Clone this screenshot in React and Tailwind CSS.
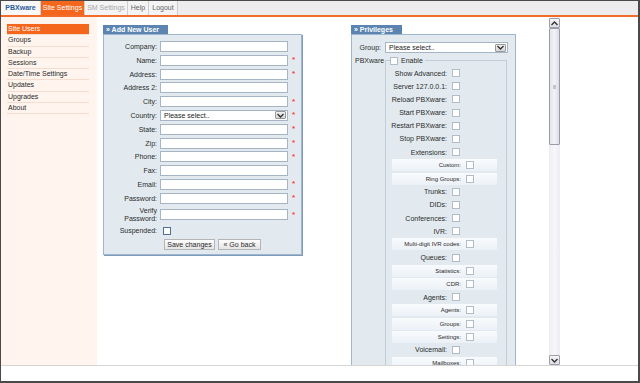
import React from "react";

const Check = ({ dark }) => (
  <span
    className={
      "inline-block w-[8px] h-[8px] bg-white border shrink-0 " +
      (dark ? "border-[#4f6f98]" : "border-[#b3bdc8]")
    }
  />
);

const Arrow = ({ up }) => (
  <svg width="7" height="5" viewBox="0 0 7 5" className="block">
    {up ? (
      <path d="M0.5 4 L3.5 1 L6.5 4" fill="none" stroke="#333" strokeWidth="1.4" />
    ) : (
      <path d="M0.5 1 L3.5 4 L6.5 1" fill="none" stroke="#333" strokeWidth="1.4" />
    )}
  </svg>
);

const Select = ({ w }) => (
  <div className={"h-[11px] bg-white border border-[#a5b5c5] flex items-center justify-between pl-[3px] pr-[1px] " + w}>
    <span className="text-[7px] leading-[9px] text-[#222]">Please select..</span>
    <span className="w-[11px] h-[8px] bg-[linear-gradient(#f2f2f2,#d6d6d6)] border border-[#9a9a9a] rounded-[1px] flex items-center justify-center">
      <Arrow />
    </span>
  </div>
);

const Req = () => <span className="ml-[4px] text-[8px] leading-[8px] text-[#ff3b3b] font-bold">*</span>;

const FormRow = ({ label, req, select }) => (
  <div className="flex items-center h-[11px]">
    <div className="w-[53px] text-right text-[7px] leading-[9px] text-[#2a2a2a] shrink-0">{label}</div>
    <div className="w-[3px]" />
    {select ? <Select w="w-[128px]" /> : <div className="w-[128px] h-[11px] bg-white border border-[#a5b5c5]" />}
    {req && <Req />}
  </div>
);

const PrivRow = ({ label, sub }) =>
  sub ? (
    <div className="flex items-center h-[12px] ml-[6px] w-[105px] bg-[linear-gradient(#f9fbfd,#ebf1f7)]">
      <div className="w-[69px] text-right text-[6px] leading-[8px] text-[#2a2a2a] shrink-0">{label}</div>
      <div className="w-[5px]" />
      <Check />
    </div>
  ) : (
    <div className="flex items-center h-[12px]">
      <div className="w-[61px] text-right text-[7px] leading-[9px] text-[#2a2a2a] shrink-0 whitespace-nowrap">{label}</div>
      <div className="w-[5px]" />
      <Check />
    </div>
  );

const privRows = [
  ["Show Advanced:"],
  ["Server 127.0.0.1:"],
  ["Reload PBXware:"],
  ["Start PBXware:"],
  ["Restart PBXware:"],
  ["Stop PBXware:"],
  ["Extensions:"],
  ["Custom:", 1],
  ["Ring Groups:", 1],
  ["Trunks:"],
  ["DIDs:"],
  ["Conferences:"],
  ["IVR:"],
  ["Multi-digit IVR codes:", 1],
  ["Queues:"],
  ["Statistics:", 1],
  ["CDR:", 1],
  ["Agents:"],
  ["Agents:", 1],
  ["Groups:", 1],
  ["Settings:", 1],
  ["Voicemail:"],
  ["Mailboxes:", 1],
];

const menu = ["Site Users", "Groups", "Backup", "Sessions", "Date/Time Settings", "Updates", "Upgrades", "About"];

export default function App() {
  return (
    <div className="w-[640px] h-[383px] bg-white border-t border-l border-r-2 border-b-2 border-[#4a4a4a] flex flex-col overflow-hidden font-['Liberation_Sans',Arial,sans-serif] text-[#2a2a2a]">
      {/* top bar */}
      <div className="h-[16px] shrink-0 bg-[#ededed] border-b-2 border-[#f26c2a] flex items-stretch">
        <div className="w-[40px] bg-[#f8f8f8] border-r border-[#cfcfcf] flex items-center justify-center text-[7px] font-bold text-[#2c5d9c]">PBXware</div>
        <div className="w-[44px] bg-[#f4661c] border-r border-[#cfcfcf] flex items-center justify-center text-[7px] text-white">Site Settings</div>
        <div className="w-[43px] bg-[#f4f4f4] border-r border-[#cfcfcf] flex items-center justify-center text-[7px] text-[#a8a8a8]">SM Settings</div>
        <div className="w-[21px] bg-[#f4f4f4] border-r border-[#cfcfcf] flex items-center justify-center text-[7px] text-[#666]">Help</div>
        <div className="w-[29px] bg-[#f4f4f4] border-r border-[#cfcfcf] flex items-center justify-center text-[7px] text-[#666]">Logout</div>
      </div>

      {/* body */}
      <div className="h-[348px] shrink-0 flex">
        <div className="w-[559px] flex overflow-hidden">
          {/* sidebar */}
          <div className="w-[96px] shrink-0 bg-[#fff4ee] pt-[7px] pl-[6px]">
            {menu.map((m, i) => (
              <div
                key={m}
                className={
                  "w-[82px] h-[11.3px] flex items-center pl-[1px] text-[7px] border-b border-[#f6dccd] " +
                  (i === 0 ? "bg-[#f4661c] text-white" : "text-[#2a2a2a]")
                }
              >
                {m}
              </div>
            ))}
          </div>

          {/* main */}
          <div className="w-[452px] shrink-0 flex items-start pt-[8px] pl-[6px]">
            {/* Add new user */}
            <div className="w-[199px] shrink-0">
              <div className="w-[65px] h-[9px] bg-[#5b84b1] text-white font-bold text-[7px] leading-[9px] pl-[3px]">» Add New User</div>
              <div className="bg-[#e2eaf0] border border-[#9fb6cf] shadow-[1px_1px_0_#7f9aba] pt-[6px] pb-[4px] flex flex-col gap-[2.8px]">
                <FormRow label="Company:" />
                <FormRow label="Name:" req />
                <FormRow label="Address:" req />
                <FormRow label="Address 2:" />
                <FormRow label="City:" req />
                <FormRow label="Country:" req select />
                <FormRow label="State:" req />
                <FormRow label="Zip:" req />
                <FormRow label="Phone:" req />
                <FormRow label="Fax:" />
                <FormRow label="Email:" req />
                <FormRow label="Password:" req />
                <div className="flex items-center h-[16px]">
                  <div className="w-[53px] text-right text-[7px] leading-[7.5px] text-[#2a2a2a] shrink-0">
                    Verify
                    <br />
                    Password:
                  </div>
                  <div className="w-[3px]" />
                  <div className="w-[128px] h-[11px] bg-white border border-[#a5b5c5]" />
                  <Req />
                </div>
                <div className="flex items-center h-[11px]">
                  <div className="w-[53px] text-right text-[7px] leading-[9px] text-[#2a2a2a] shrink-0">Suspended:</div>
                  <div className="w-[6px]" />
                  <Check dark />
                </div>
                <div className="flex items-center h-[11px] pl-[60px] gap-[3px]">
                  <button className="w-[51px] h-[11px] bg-[linear-gradient(#fdfdfd,#e4e4e4)] border border-[#b5b5b5] text-[7px] leading-[9px] text-[#2a2a2a]">Save changes</button>
                  <button className="w-[43px] h-[11px] bg-[linear-gradient(#fdfdfd,#e4e4e4)] border border-[#b5b5b5] text-[7px] leading-[9px] text-[#2a2a2a]">« Go back</button>
                </div>
              </div>
            </div>

            {/* Privileges */}
            <div className="w-[165px] shrink-0 ml-[49px]">
              <div className="w-[51px] h-[9px] bg-[#5b84b1] text-white font-bold text-[7px] leading-[9px] pl-[3px]">» Privileges</div>
              <div className="bg-[#e2eaf0] border border-[#9fb6cf] pt-[7px] h-[400px]">
                <div className="flex items-center h-[11px]">
                  <div className="w-[29px] text-right text-[7px] leading-[9px] shrink-0">Group:</div>
                  <div className="w-[4px]" />
                  <Select w="w-[123px]" />
                </div>
                <div className="flex mt-[3px]">
                  <div className="w-[33px] shrink-0 pl-[3px] text-[7px] leading-[9px]">PBXware</div>
                  <fieldset className="w-[122px] h-[360px] border border-[#c3ccd5]">
                    <legend className="ml-[4px] flex items-center h-[9px] px-[0px]">
                      <Check />
                      <span className="ml-[3px] text-[7px] leading-[9px] pr-[2px]">Enable</span>
                    </legend>
                    <div className="flex flex-col gap-[1.2px] pt-[2px]">
                      {privRows.map(([l, s], i) => (
                        <PrivRow key={i} label={l} sub={!!s} />
                      ))}
                    </div>
                  </fieldset>
                </div>
              </div>
            </div>
          </div>

          {/* scrollbar */}
          <div className="w-[11px] shrink-0 flex flex-col pt-[1px] bg-[#f3f3f8]">
            <div className="h-[10px] bg-[linear-gradient(#f6f6f8,#dedee4)] border border-[#9d9dab] rounded-[1px] flex items-center justify-center">
              <Arrow up />
            </div>
            <div className="h-[117px] bg-[linear-gradient(90deg,#e4e4ec,#f2f2f6,#dcdce6)] border border-[#9a9aa8] rounded-[1px] flex items-center justify-center">
              <span className="w-[3px] h-[4px] bg-[#c4c4cc]" />
            </div>
            <div className="flex-1 bg-[linear-gradient(90deg,#ececf3,#f7f7fa,#ececf3)]" />
            <div className="h-[10px] bg-[linear-gradient(#f6f6f8,#dedee4)] border border-[#9d9dab] rounded-[1px] flex items-center justify-center">
              <Arrow />
            </div>
          </div>
        </div>
        <div className="flex-1 bg-white" />
      </div>

      <div className="h-[1px] shrink-0 bg-[#d6d6d6]" />
      <div className="flex-1 bg-white" />
    </div>
  );
}
